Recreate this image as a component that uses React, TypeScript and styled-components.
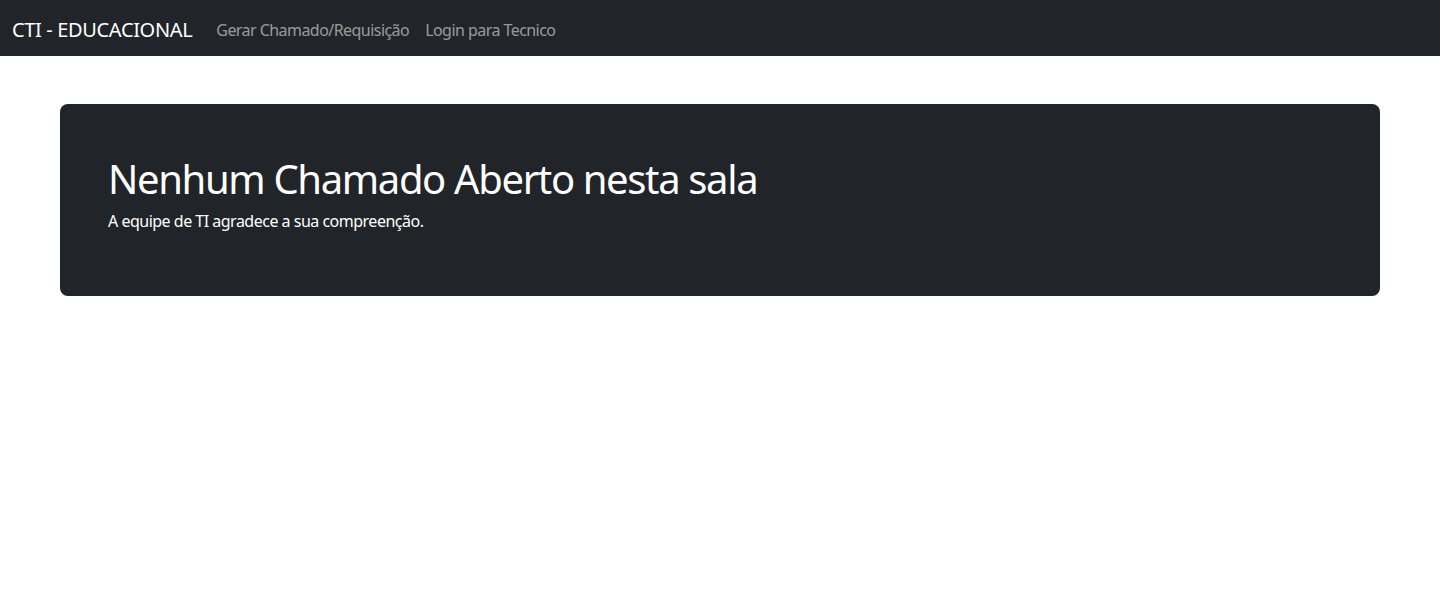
import React from "react";
import styled, { createGlobalStyle } from "styled-components";

const Global = createGlobalStyle`
  html, body { margin: 0; padding: 0; background: #fff; }
  body {
    font-family: "Segoe UI", "Noto Sans", sans-serif;
    font-size: 16px;
    line-height: 1.5;
    color: #212529;
  }
  * { box-sizing: border-box; }
`;

const Navbar = styled.nav`
  background: #212529;
  height: 56px;
  padding: 10px 12px 6px;
  display: flex;
  align-items: center;
`;

const Brand = styled.a`
  color: #fff;
  font-size: 20px;
  line-height: 30px;
  margin-right: 16px;
  text-decoration: none;
  letter-spacing: -0.35px;
`;

const NavLinks = styled.div`
  display: flex;
`;

const NavLink = styled.a`
  color: rgba(255, 255, 255, 0.55);
  padding: 8px;
  text-decoration: none;
  font-size: 16px;
  letter-spacing: -0.55px;
`;

const Jumbo = styled.section`
  margin: 48px 60px 0;
  background: #212529;
  border-radius: 8px;
  padding: 48px;
  color: #fff;
`;

const Title = styled.h1`
  margin: 0 0 6px;
  padding-top: 3px;
  font-size: 40px;
  font-weight: 400;
  line-height: 1.2;
  letter-spacing: -1.36px;
`;

const Lead = styled.p`
  margin: 0 0 15px;
  font-size: 16px;
  letter-spacing: -0.5px;
`;

export default function App() {
  return (
    <>
      <Global />
      <Navbar>
        <Brand href="#">CTI - EDUCACIONAL</Brand>
        <NavLinks>
          <NavLink href="#">Gerar Chamado/Requisição</NavLink>
          <NavLink href="#">Login para Tecnico</NavLink>
        </NavLinks>
      </Navbar>
      <Jumbo>
        <Title>Nenhum Chamado Aberto nesta sala</Title>
        <Lead>A equipe de TI agradece a sua compreenção.</Lead>
      </Jumbo>
    </>
  );
}
